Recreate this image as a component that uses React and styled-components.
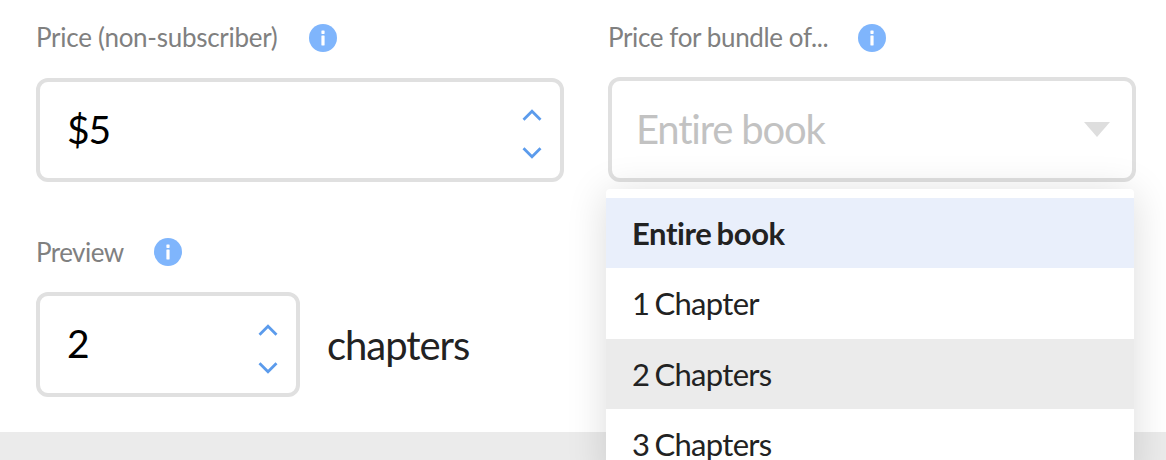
import React from "react";
import styled, { createGlobalStyle } from "styled-components";

const Global = createGlobalStyle`
  html, body { margin: 0; padding: 0; background: #fff; }
  body { font-family: "Lato", "Noto Sans", sans-serif; overflow: hidden; }
`;
const Page = styled.div`
  width: 1166px; height: 460px; overflow: hidden; position: relative; background: #fff;
  display: flex; flex-direction: column;
`;
const Form = styled.div`
  height: 432px; box-sizing: border-box; padding: 0 30px 0 36px;
  display: grid; grid-template-columns: 528px 528px; column-gap: 44px; align-content: start;
`;
const Column = styled.div`
  position: relative; display: flex; flex-direction: column;
`;
const LabelRow = styled.div`
  height: 28px; margin-top: ${p => p.$top}px; margin-bottom: ${p => p.$bottom}px;
  display: flex; align-items: center; gap: ${p => p.$gap}px;
`;
const Label = styled.span`
  font-size: 26px; color: #808080; line-height: 26px; letter-spacing: ${p => p.$ls}px; padding-bottom: ${p => p.$pb}px;
`;
const Info = styled.svg`
  width: 28px; height: 28px; flex: none; display: block;
`;
const Box = styled.div`
  box-sizing: border-box; width: ${p => p.$w}px; height: ${p => p.$h}px;
  border: 4px solid #e0e0e0; border-radius: 12px; background: #fff;
  display: flex; align-items: center; justify-content: space-between;
  padding: 0 ${p => p.$pr}px 0 ${p => p.$pl}px;
`;
const Value = styled.span`
  font-size: 39px; color: #000; line-height: 1; letter-spacing: -1.2px; padding-bottom: ${p => p.$pb}px;
`;
const Placeholder = styled.span`
  font-size: 40px; color: #c2c2c2; line-height: 1; letter-spacing: -1.2px; padding-bottom: 2px;
`;
const Arrows = styled.div`
  display: flex; flex-direction: column; gap: 26px; align-items: center; margin-top: 8px;
`;
const Chevron = styled.svg`
  width: 20px; height: 12px; display: block;
`;
const Caret = styled.div`
  width: 0; height: 0; border-left: 13.5px solid transparent; border-right: 13.5px solid transparent;
  border-top: 15px solid #dedede;
`;
const PreviewRow = styled.div`
  display: flex; align-items: center; gap: 27px;
`;
const Unit = styled.span`
  font-size: 40px; color: #222; line-height: 1; letter-spacing: -1.05px;
`;
const Band = styled.div`
  flex: 1; background: #ebebeb;
`;
const Menu = styled.div`
  position: absolute; left: -2px; top: 189px; width: 528px; box-sizing: border-box;
  background: #fff; padding-top: 9px; border-radius: 4px 4px 0 0;
  box-shadow: 0 4px 40px rgba(0,0,0,0.14);
`;
const Item = styled.div`
  height: ${p => p.$h}px; display: flex; align-items: center; padding: 0 0 1px 26px; box-sizing: border-box;
  font-size: 31px; color: #222; font-weight: ${p => (p.$selected ? 700 : 400)};
  letter-spacing: ${p => (p.$selected ? "-0.4px" : "-0.7px")}; word-spacing: -2px;
  background: ${p => (p.$selected ? "#e9effb" : p.$hover ? "#ebebeb" : "#fff")};
`;

const InfoIcon = () => (
  <Info viewBox="0 0 28 28">
    <circle cx="14" cy="14" r="14" fill="#7fb5fc" />
    <rect x="12.4" y="6.5" width="3.2" height="3.4" rx="0.6" fill="#fff" />
    <rect x="12.4" y="11.5" width="3.2" height="10" rx="0.4" fill="#fff" />
  </Info>
);
const Up = () => (
  <Chevron viewBox="0 0 20 12"><path d="M1.5 10.8 L10 2.3 L18.5 10.8" fill="none" stroke="#5b9bec" strokeWidth="2.8" /></Chevron>
);
const Down = () => (
  <Chevron viewBox="0 0 20 12"><path d="M1.5 1.2 L10 9.7 L18.5 1.2" fill="none" stroke="#5b9bec" strokeWidth="2.8" /></Chevron>
);
const Stepper = () => (<Arrows><Up /><Down /></Arrows>);

export default function App() {
  return (
    <Page>
      <Global />
      <Form>
        <Column>
          <LabelRow $top={24} $bottom={26} $gap={32}><Label $ls={-0.28} $pb={2}>Price (non-subscriber)</Label><InfoIcon /></LabelRow>
          <Box $w={528} $h={104} $pl={27} $pr={18}><Value $pb={1}>$5</Value><Stepper /></Box>
          <LabelRow $top={56} $bottom={26} $gap={30}><Label $ls={-0.55} $pb={0}>Preview</Label><InfoIcon /></LabelRow>
          <PreviewRow>
            <Box $w={264} $h={105} $pl={27} $pr={18}><Value $pb={2}>2</Value><Stepper /></Box>
            <Unit>chapters</Unit>
          </PreviewRow>
        </Column>
        <Column>
          <LabelRow $top={24} $bottom={25} $gap={30}><Label $ls={-0.38} $pb={2}>Price for bundle of...</Label><InfoIcon /></LabelRow>
          <Box $w={528} $h={105} $pl={24} $pr={22}><Placeholder>Entire book</Placeholder><Caret /></Box>
          <Menu>
            <Item $h={70} $selected>Entire book</Item>
            <Item $h={71}>1 Chapter</Item>
            <Item $h={70} $hover>2 Chapters</Item>
            <Item $h={70}>3 Chapters</Item>
          </Menu>
        </Column>
      </Form>
      <Band />
    </Page>
  );
}
